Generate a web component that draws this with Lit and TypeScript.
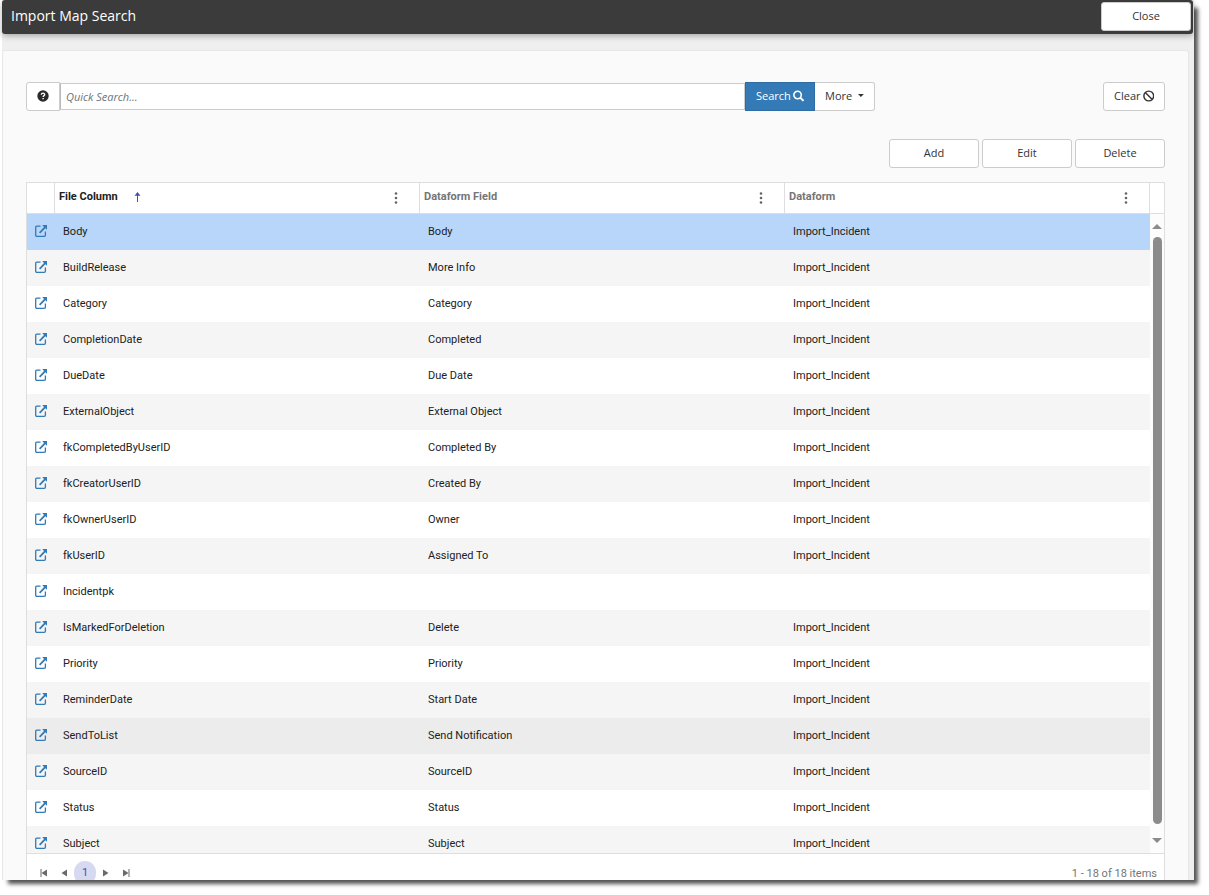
import { LitElement, html, css, svg } from "lit";
import { customElement, state } from "lit/decorators.js";

interface ImportMap {
  column: string;
  field: string;
  dataform: string;
}

const DATAFORM = "Import_Incident";

const ROWS: ImportMap[] = [
  ["Body", "Body"],
  ["BuildRelease", "More Info"],
  ["Category", "Category"],
  ["CompletionDate", "Completed"],
  ["DueDate", "Due Date"],
  ["ExternalObject", "External Object"],
  ["fkCompletedByUserID", "Completed By"],
  ["fkCreatorUserID", "Created By"],
  ["fkOwnerUserID", "Owner"],
  ["fkUserID", "Assigned To"],
  ["Incidentpk", ""],
  ["IsMarkedForDeletion", "Delete"],
  ["Priority", "Priority"],
  ["ReminderDate", "Start Date"],
  ["SendToList", "Send Notification"],
  ["SourceID", "SourceID"],
  ["Status", "Status"],
  ["Subject", "Subject"],
].map(([column, field]) => ({ column, field, dataform: field ? DATAFORM : "" }));

const HEADERS = ["File Column", "Dataform Field", "Dataform"];

const openIcon = html`<svg width="12" height="12" viewBox="0 0 12 12" aria-hidden="true">
  <path d="M5.500 1.100H1.800A1.100 1.100 0 0 0 .7 2.200V10.200A1.100 1.100 0 0 0 1.800 11.300H9.300A1.100 1.100 0 0 0 10.400 10.200V6.600" fill="none" stroke="#337ab7" stroke-width="1.300"/>
  <path d="M7.200 0H12V4.800L10.400 3.200L5.200 8.400L4 7.200L9 1.900Z" fill="#337ab7"/>
</svg>`;

const pagerIcon = (first: boolean, bar: boolean) => html`<svg width="8" height="8" viewBox="0 0 8 8" aria-hidden="true">
  ${first
    ? svg`<path d="M7 .5V7.500L1.500 4Z" fill="#6a6a6a"/>`
    : svg`<path d="M1 .5V7.500L6.500 4Z" fill="#6a6a6a"/>`}
  ${bar ? (first ? svg`<path d="M.5 0H1.500V8H.5Z" fill="#6a6a6a"/>` : svg`<path d="M6.500 0H7.500V8H6.500Z" fill="#6a6a6a"/>`) : ""}
</svg>`;

@customElement("app-root")
export class AppRoot extends LitElement {
  @state() private selected = 0;
  @state() private hovered = 14;

  static styles = css`
    :host {
      display: block;
      height: 100vh;
      box-sizing: border-box;
      padding: 0 15px 15px 0;
      background: #fff;
      color: #333;
      font: 11px/16px "Open Sans", "Noto Sans", sans-serif;
      overflow: hidden;
    }
    * {
      box-sizing: border-box;
    }
    .window {
      display: flex;
      flex-direction: column;
      height: 100%;
      padding: 0 1px 0 2px;
      background: linear-gradient(90deg, #fff 2px, #efefef 2px);
      box-shadow: 6px 6px 4px -2px #555;
    }
    .titlebar {
      display: flex;
      justify-content: space-between;
      align-items: flex-start;
      height: 34px;
      padding: 2px 2px 0 9px;
      background: #3b3b3b;
      border-radius: 3px;
      box-shadow: 0 2px 6px rgba(0, 0, 0, 0.3);
    }
    h1 {
      margin: 0;
      padding-top: 4px;
      color: #fff;
      font-size: 14px;
      line-height: 20px;
      font-weight: 400;
    }
    button {
      height: 29px;
      padding: 0 10px 2px;
      background: #fff;
      border: 1px solid #ccc;
      border-radius: 3px;
      color: #333;
      font: inherit;
      cursor: pointer;
    }
    .wide {
      width: 90px;
    }
    .panel {
      display: flex;
      flex-direction: column;
      flex: 1;
      min-height: 0;
      margin: 16px 4px 0 0;
      padding: 31px 23px 0;
      background: #fafafa;
      border: 1px solid #e7e7e7;
      border-bottom: 0;
      border-radius: 3px 3px 0 0;
    }
    .search {
      display: flex;
      align-items: center;
    }
    .search button {
      display: flex;
      align-items: center;
      justify-content: center;
      gap: 2px;
    }
    .search .help {
      width: 34px;
      border-radius: 3px 0 0 3px;
    }
    input {
      flex: 1;
      min-width: 0;
      height: 27px;
      padding: 0 5px;
      border: 1px solid #ccc;
      border-left-color: #bbb;
      background: #fff;
      font: inherit;
      outline: none;
    }
    input::placeholder {
      color: #6c757d;
      font-style: italic;
      opacity: 1;
    }
    .search .go {
      width: 70px;
      background: #337ab7;
      border-color: #2e6da4;
      border-radius: 0;
      color: #fff;
    }
    .search .more {
      width: 60px;
      gap: 6px;
      border-left: 0;
      border-radius: 0 3px 3px 0;
    }
    .search .clear {
      width: 62px;
      margin-left: 228px;
    }
    .actions {
      display: flex;
      justify-content: flex-end;
      gap: 3px;
      margin: 28px 0 14px;
    }
    .grid {
      display: flex;
      flex-direction: column;
      flex: 1;
      min-height: 0;
      border: 1px solid #dedede;
      border-bottom: 0;
      background: #fff;
      font-family: Roboto, sans-serif;
      color: #212121;
    }
    .view {
      display: flex;
      flex: 1;
      min-height: 0;
      overflow: hidden;
      border-bottom: 1px solid #dedede;
    }
    .rows {
      flex: 1;
      min-width: 0;
    }
    table {
      width: 100%;
      table-layout: fixed;
      border-collapse: separate;
      border-spacing: 0;
    }
    .open-col {
      width: 28px;
    }
    th {
      height: 31px;
      padding: 0 17px 3px 4px;
      border-right: 1px solid #dedede;
      border-bottom: 1px solid #dedede;
      color: #757575;
      text-align: left;
      font-weight: 700;
    }
    th.sorted {
      color: #212121;
    }
    .head {
      display: flex;
      align-items: center;
    }
    .head svg {
      margin-left: 15px;
    }
    .head .menu {
      display: flex;
      justify-content: center;
      width: 12px;
      height: 16px;
      margin-left: auto;
      padding: 3px 0 0;
      border: 0;
      background: none;
    }
    .head .menu svg {
      margin: 0;
    }
    td {
      height: 36px;
      padding: 0 8px;
    }
    td svg {
      display: block;
      margin-bottom: 2px;
    }
    tbody tr:nth-child(even) {
      background: #f5f5f5;
    }
    tbody tr.hovered {
      background: #ececec;
    }
    tbody tr.selected {
      background: #b8d6f9;
    }
    .scroll {
      display: flex;
      flex-direction: column;
      align-items: center;
      width: 14px;
      background: #fcfcfc;
    }
    .corner {
      align-self: stretch;
      height: 31px;
      margin-bottom: 10px;
      background: #fff;
      border-bottom: 1px solid #dedede;
    }
    .thumb {
      flex: 1;
      width: 9px;
      margin: 8px 0 14px;
      border-radius: 5px;
      background: #8b8b8b;
    }
    .up,
    .down {
      border: 5px solid transparent;
    }
    .up {
      border-top: 0;
      border-bottom-color: #8b8b8b;
    }
    .down {
      margin-bottom: 10px;
      border-bottom: 0;
      border-top-color: #8b8b8b;
    }
    .pager {
      display: flex;
      align-items: flex-start;
      justify-content: space-between;
      height: 26px;
      padding: 7px 7px 0;
      overflow: hidden;
      color: #757575;
      line-height: 26px;
    }
    .pages {
      display: flex;
    }
    .pages button {
      display: flex;
      align-items: center;
      justify-content: center;
      width: 20px;
      height: 24px;
      padding: 0;
      border: 0;
      background: none;
    }
    .pages .current {
      width: 22px;
      border-radius: 12px;
      background: #d6d9f0;
      color: #3f51b5;
    }
  `;

  private renderHeader(label: string, index: number) {
    return html`<th class=${index === 0 ? "sorted" : ""} scope="col">
      <div class="head">
        <span>${label}</span>
        ${index === 0
          ? html`<svg width="9" height="10" viewBox="0 0 9 10" aria-hidden="true">
              <path d="M4.500 0L7.500 3.800H1.500ZM4 3.500H5V10H4Z" fill="#3f51b5" />
            </svg>`
          : ""}
        <button class="menu" aria-label="${label} column menu">
          <svg width="4" height="12" viewBox="0 0 4 12">
            <g fill="#656565">
              <circle cx="2" cy="1.500" r="1.300" />
              <circle cx="2" cy="6" r="1.300" />
              <circle cx="2" cy="10.500" r="1.300" />
            </g>
          </svg>
        </button>
      </div>
    </th>`;
  }

  private renderRow(row: ImportMap, index: number) {
    const name = index === this.selected ? "selected" : index === this.hovered ? "hovered" : "";
    return html`<tr
      class=${name}
      @click=${() => (this.selected = index)}
      @mouseenter=${() => (this.hovered = index)}
    >
      <td><a href="#" aria-label="Open ${row.column}">${openIcon}</a></td>
      <td>${row.column}</td>
      <td>${row.field}</td>
      <td>${row.dataform}</td>
    </tr>`;
  }

  render() {
    return html`<div class="window">
      <header class="titlebar">
        <h1>Import Map Search</h1>
        <button class="wide">Close</button>
      </header>
      <main class="panel">
        <div class="search">
          <button class="help" aria-label="Search help">
            <svg width="12" height="12" viewBox="0 0 12 12">
              <circle cx="6" cy="6" r="5.700" fill="#2b2b2b" />
              <path d="M4.300 4.700C4.300 2.500 7.800 2.600 7.700 4.600C7.600 5.700 6.200 5.600 6.100 7" fill="none" stroke="#fff" stroke-width="1.300" />
              <path d="M5.400 7.900H6.800V9.300H5.400Z" fill="#fff" />
            </svg>
          </button>
          <input type="text" aria-label="Quick Search" placeholder="Quick Search..." />
          <button class="go">
            Search
            <svg width="12" height="12" viewBox="0 0 12 12" fill="none" stroke="#fff" aria-hidden="true">
              <circle cx="4.900" cy="4.900" r="4" stroke-width="1.700" />
              <path d="M7.800 7.800L11.300 11.300" stroke-width="2" />
            </svg>
          </button>
          <button class="more">
            More
            <svg width="6" height="3" viewBox="0 0 6 3" aria-hidden="true"><path d="M0 0H6L3 3Z" fill="#333" /></svg>
          </button>
          <button class="clear">
            Clear
            <svg width="12" height="12" viewBox="0 0 12 12" fill="none" stroke="#333" stroke-width="1.500" aria-hidden="true">
              <circle cx="6" cy="6" r="5.100" />
              <path d="M2.600 2.600L9.400 9.400" />
            </svg>
          </button>
        </div>
        <div class="actions">
          <button class="wide">Add</button>
          <button class="wide">Edit</button>
          <button class="wide">Delete</button>
        </div>
        <section class="grid">
          <div class="view">
            <div class="rows">
              <table>
                <colgroup>
                  <col class="open-col" />
                  <col />
                  <col />
                  <col />
                </colgroup>
                <thead>
                  <tr>
                    <th></th>
                    ${HEADERS.map((label, i) => this.renderHeader(label, i))}
                  </tr>
                </thead>
                <tbody>
                  ${ROWS.map((row, i) => this.renderRow(row, i))}
                </tbody>
              </table>
            </div>
            <div class="scroll" aria-hidden="true">
              <div class="corner"></div>
              <div class="up"></div>
              <div class="thumb"></div>
              <div class="down"></div>
            </div>
          </div>
          <footer class="pager">
            <nav class="pages" aria-label="Pages">
              <button aria-label="First page">${pagerIcon(true, true)}</button>
              <button aria-label="Previous page">${pagerIcon(true, false)}</button>
              <button class="current">1</button>
              <button aria-label="Next page">${pagerIcon(false, false)}</button>
              <button aria-label="Last page">${pagerIcon(false, true)}</button>
            </nav>
            <span>1 - ${ROWS.length} of ${ROWS.length} items</span>
          </footer>
        </section>
      </main>
    </div>`;
  }
}
